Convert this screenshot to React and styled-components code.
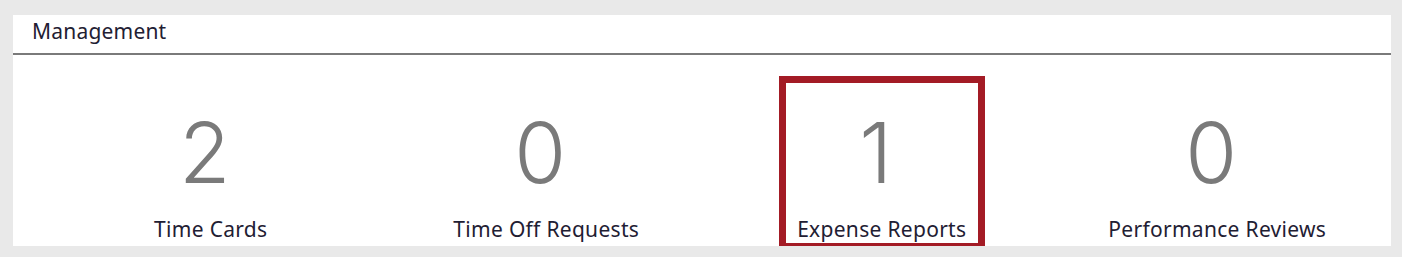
import React from "react";
import styled, { createGlobalStyle } from "styled-components";

const GlobalStyle = createGlobalStyle`
  html, body {
    margin: 0;
    padding: 0;
    background: #e9e9e9;
  }
  body {
    font-family: "Noto Sans", "Liberation Sans", sans-serif;
  }
`;

const Panel = styled.section`
  margin: 15px 11px 0 13px;
  background: #ffffff;
`;

const Header = styled.header`
  height: 40px;
  display: flex;
  align-items: center;
  padding: 0 0 7px 19px;
  box-sizing: border-box;
  border-bottom: 2px solid #7a7a7a;
  color: #1f2033;
  font-size: 21px;
  letter-spacing: 0.2px;
`;

const Body = styled.div`
  height: 191px;
  padding: 0 6px 0 30px;
  display: grid;
  grid-template-columns: repeat(4, 1fr);
`;

const Cell = styled.div`
  display: flex;
  justify-content: center;
`;

const Tile = styled.div`
  box-sizing: border-box;
  width: 206px;
  height: 174px;
  margin-top: 21px;
  border: 7px solid ${({ $active }) => ($active ? "#a31b25" : "transparent")};
  display: flex;
  flex-direction: column;
  align-items: center;
`;

const Count = styled.div`
  margin-top: 28px;
  padding-right: 12px;
  font-family: Inter, Roboto, "Liberation Sans", sans-serif;
  font-weight: 300;
  font-size: 84px;
  line-height: 1;
  color: #7a7a7a;
`;

const Label = styled.div`
  margin-top: auto;
  margin-bottom: 0;
  white-space: nowrap;
  font-size: 21px;
  letter-spacing: 0.3px;
  color: #1f2033;
`;

const items = [
  { count: 2, label: "Time Cards" },
  { count: 0, label: "Time Off Requests" },
  { count: 1, label: "Expense Reports", active: true },
  { count: 0, label: "Performance Reviews" },
];

export default function App() {
  return (
    <>
      <GlobalStyle />
      <Panel>
        <Header>Management</Header>
        <Body>
          {items.map((item) => (
            <Cell key={item.label}>
              <Tile $active={item.active}>
                <Count>{item.count}</Count>
                <Label>{item.label}</Label>
              </Tile>
            </Cell>
          ))}
        </Body>
      </Panel>
    </>
  );
}
